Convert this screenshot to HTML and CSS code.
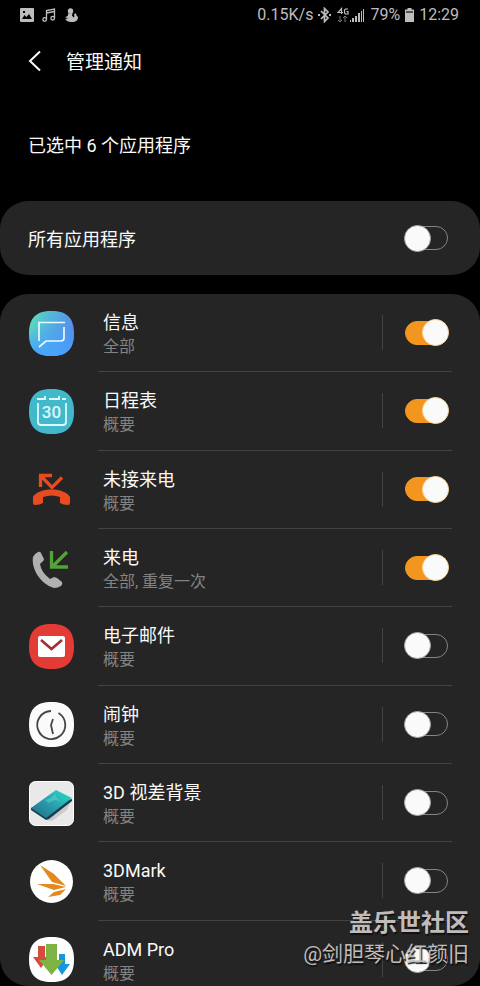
FILE: index.html
```html
<!DOCTYPE html>
<html lang="zh-CN">
<head>
<meta charset="utf-8">
<meta name="viewport" content="width=device-width, initial-scale=1">
<title>管理通知</title>
<link rel="stylesheet" href="styles.css">
</head>
<body>
<div class="status">
  <div class="status-side status-left">
    <svg width="14" height="14" viewBox="0 0 14 14"><path fill="currentColor" fill-rule="evenodd" d="M1 0h12q1 0 1 1v12q0 1-1 1H1q-1 0-1-1V1q0-1 1-1zM2 11h10L9 6 6.500 9 4.500 7zM3 3v2h2V3z"/></svg>
    <svg width="14" height="14" viewBox="0 0 14 14"><g fill="none" stroke="currentColor" stroke-width="1.300"><path d="M4.500 11.500V2.500L12.500 1v9M4.500 5l8-1.500"/><circle cx="2.700" cy="11.500" r="1.800"/><circle cx="10.700" cy="10.200" r="1.800"/></g></svg>
    <svg width="14" height="14" viewBox="0 0 14 14"><g fill="currentColor"><circle cx="6.500" cy="3" r="2.700"/><path d="M4 5.500 8.500 5 8 7.500l1.500 2 1-1-.5-2L12 5l.5 2.500L14 9c0 3-2 5-6 5S1.500 12.500 1.500 11l3-1-3.500-.5 3-2z"/></g></svg>
  </div>
  <div class="status-side status-right">
    <span>0.15K/s</span>
    <svg width="14" height="16" viewBox="0 0 14 16"><path fill="none" stroke="currentColor" stroke-width="1.700" d="m3 4 7 7-3.500 3.500v-13L10 5l-7 7"/><path fill="currentColor" d="M0 7h2v2H0zM11 7h2v2h-2z"/></svg>
    <svg width="28" height="16" viewBox="0 0 28 16"><path fill="none" stroke="currentColor" stroke-width="1.200" d="M4.500 7V1.500L1 5.500h5M11 2H8.500L7.500 3v3l1 1H11V4.500H9.500"/><path fill="none" stroke="#777" d="M3 9v6M1 13l2 2 2-2M8 15V9M6 11l2-2 2 2"/><path fill="currentColor" d="M13 13h1v2h-1zM15 11h2v4h-2zM18 9h2v6h-2zM21 6h2v9h-2zM24 4h1v11h-1zM26 2h1v13h-1z"/></svg>
    <span>79%</span>
    <svg width="9" height="14" viewBox="0 0 9 14"><path fill="currentColor" d="M2.500 0h4v1.500H9V14H0V1.500h2.500z"/><path fill="#555" d="M1 3h7v2H1z"/></svg>
    <span>12:29</span>
  </div>
</div>
<header class="header">
  <button class="back" type="button" aria-label="返回"><svg width="14" height="22" viewBox="0 0 14 22"><path fill="none" stroke="currentColor" stroke-width="2" d="m12 1.500-10 9.500 10 9.500"/></svg></button>
  <h1 class="title">管理通知</h1>
</header>
<p class="summary">已选中 6 个应用程序</p>
<main class="main">
  <section class="card all">
    <label class="all-label" for="all">所有应用程序</label>
    <input class="switch" type="checkbox" id="all">
  </section>
  <section class="card apps">
    <ul class="list">
      <li class="row">
        <svg class="icon" viewBox="0 0 45 45"><defs><linearGradient id="msg" x1="0" y1="0" x2="1" y2=".4"><stop offset="0" stop-color="#5ee6b5"/><stop offset=".45" stop-color="#54b5dc"/><stop offset="1" stop-color="#568cec"/></linearGradient><linearGradient id="msgb" x1="0" y1="0" x2="0" y2="1"><stop offset=".35" stop-color="#45a5ff" stop-opacity="0"/><stop offset="1" stop-color="#45a5ff"/></linearGradient></defs><path fill="url(#msg)" d="M22.500 0C38 0 45 7 45 22.500S38 45 22.500 45 0 38 0 22.500 7 0 22.500 0z"/><path fill="url(#msgb)" d="M22.500 0C38 0 45 7 45 22.500S38 45 22.500 45 0 38 0 22.500 7 0 22.500 0z"/><path fill="none" stroke="#e8fbff" stroke-width="1.700" d="M36 11.500H10V30M35 16v11q0 3-3 3H17l-7 6"/></svg>
        <div class="body"><label class="text" for="a1"><span class="name">信息</span><span class="mode">全部</span></label><span class="control"><input class="switch" type="checkbox" id="a1" checked></span></div>
      </li>
      <li class="row">
        <svg class="icon" viewBox="0 0 45 45"><path fill="#42b9ca" d="M22.500 0C38 0 45 7 45 22.500S38 45 22.500 45 0 38 0 22.500 7 0 22.500 0z"/><path fill="none" stroke="#dcfaff" stroke-width="1.800" d="M9 14v19q0 3 3 3h22q3 0 3-3V14M8 10h8V7M20 10h10V7M33 10h4"/><text x="22.500" y="29" text-anchor="middle" class="date">30</text></svg>
        <div class="body"><label class="text" for="a2"><span class="name">日程表</span><span class="mode">概要</span></label><span class="control"><input class="switch" type="checkbox" id="a2" checked></span></div>
      </li>
      <li class="row">
        <svg class="icon" viewBox="0 0 45 45"><path fill="none" stroke="#e94b20" stroke-width="3.300" d="M11.500 20V8.500H23M12 9l11 11.500L33 10.500"/><path fill="#e94b20" d="M4 30c5-10 32-10 37 0v6q0 2-2 2-5 0-8-2v-6q-8-3-17 0v6q-3 2-8 2-2 0-2-2z"/></svg>
        <div class="body"><label class="text" for="a3"><span class="name">未接来电</span><span class="mode">概要</span></label><span class="control"><input class="switch" type="checkbox" id="a3" checked></span></div>
      </li>
      <li class="row">
        <svg class="icon" viewBox="0 0 45 45"><path fill="#aeb0b1" d="M4 11q1-3 5-5 2-1 3 1l3 6q0 2-2 3l-2 2q1 8 10 15l4-2 3 1 5 4q1 2-1 4-3 2-7 2C11 38 2 22 4 11z"/><path fill="none" stroke="#54a23a" stroke-width="3.300" d="M22.500 5v16H39M24 20 38 6"/></svg>
        <div class="body"><label class="text" for="a4"><span class="name">来电</span><span class="mode">全部, 重复一次</span></label><span class="control"><input class="switch" type="checkbox" id="a4" checked></span></div>
      </li>
      <li class="row">
        <svg class="icon" viewBox="0 0 45 45"><path fill="#e33b36" d="M22.500 0C38 0 45 7 45 22.500S38 45 22.500 45 0 38 0 22.500 7 0 22.500 0z"/><rect x="9" y="12" width="27" height="21" rx="2" fill="#fff"/><path fill="none" stroke="#a52e31" stroke-width="2.600" d="m12 16 10.500 9L33 16"/></svg>
        <div class="body"><label class="text" for="a5"><span class="name">电子邮件</span><span class="mode">概要</span></label><span class="control"><input class="switch" type="checkbox" id="a5"></span></div>
      </li>
      <li class="row">
        <svg class="icon" viewBox="0 0 45 45"><path fill="#fafafa" d="M22.500 0C38 0 45 7 45 22.500S38 45 22.500 45 0 38 0 22.500 7 0 22.500 0z"/><path fill="none" stroke="#454545" stroke-width="1.800" d="M22 9A14 14 0 1 0 29.500 11M24 17l-2 6 2 9"/></svg>
        <div class="body"><label class="text" for="a6"><span class="name">闹钟</span><span class="mode">概要</span></label><span class="control"><input class="switch" type="checkbox" id="a6"></span></div>
      </li>
      <li class="row">
        <svg class="icon" viewBox="0 0 45 45"><defs><linearGradient id="phone" x1="0" y1="1" x2="1" y2="0"><stop offset="0" stop-color="#206b85"/><stop offset=".5" stop-color="#2c9eae"/><stop offset="1" stop-color="#21e5c5"/></linearGradient></defs><rect x=".5" y=".5" width="44" height="44" rx="6" fill="#e9e9ea" stroke="#fff"/><path fill="#cbcbcd" d="m17 39 25-19-4 9-15 11z"/><path fill="#16404f" d="M2 27v2l15 10 3-1 23-18v-2z"/><path fill="url(#phone)" d="m2 27 25-18 16 8-26 20z"/><path fill="#67d4d0" opacity=".5" d="m16 19 6-2 4-4 2 4 4 3-7-1-5 3z"/></svg>
        <div class="body"><label class="text" for="a7"><span class="name">3D 视差背景</span><span class="mode">概要</span></label><span class="control"><input class="switch" type="checkbox" id="a7"></span></div>
      </li>
      <li class="row">
        <svg class="icon" viewBox="0 0 45 45"><circle cx="22.500" cy="22.500" r="21.500" fill="#fff"/><path fill="#e28a1c" d="m11 6 14 9 12 12-14-4zM8 25l16 0 13 3-12 3zM37 30l-6 6-12 2 6-5z"/></svg>
        <div class="body"><label class="text" for="a8"><span class="name">3DMark</span><span class="mode">概要</span></label><span class="control"><input class="switch" type="checkbox" id="a8"></span></div>
      </li>
      <li class="row">
        <svg class="icon" viewBox="0 0 45 45"><path fill="#fff" d="M22.500 0C38 0 45 7 45 22.500S38 45 22.500 45 0 38 0 22.500 7 0 22.500 0z"/><path fill="#d54b3d" d="M9 9h7v11h4L12 31 4 20h5z"/><path fill="#1697df" d="M30 17h6v10h5l-8 11-7-11h4z"/><path fill="#7cb342" d="M17 7h11v16h7L22.500 38 10 23h7z"/></svg>
        <div class="body"><label class="text" for="a9"><span class="name">ADM Pro</span><span class="mode">概要</span></label><span class="control"><input class="switch" type="checkbox" id="a9"></span></div>
      </li>
    </ul>
  </section>
</main>
<div class="watermark"><strong class="community">盖乐世社区</strong><span class="author">@剑胆琴心红颜旧</span></div>
</body>
</html>
```
FILE: styles.css
```css
* { box-sizing: border-box; }
body {
  margin: 0;
  height: 100vh;
  display: flex;
  flex-direction: column;
  position: relative;
  overflow: hidden;
  background: #000;
  color: #fafafa;
  font-family: Roboto, "Noto Sans CJK SC", sans-serif;
  font-size: 18px;
  line-height: 24px;
}
svg { display: block; flex: none; }
.status {
  display: flex;
  justify-content: space-between;
  height: 30px;
  padding: 0 21px 0 20px;
  color: #bdbdbd;
  font-size: 16px;
}
.status-side { display: flex; align-items: center; }
.status-left { gap: 8px; }
.status-right { gap: 5px; }
.header {
  display: flex;
  align-items: center;
  height: 62px;
  padding: 0 28px;
  gap: 24px;
}
.back {
  display: flex;
  padding: 0;
  border: 0;
  background: none;
  color: inherit;
}
.title { margin: 0; padding-top: 4px; font-size: 19px; font-weight: 400; }
.summary { margin: 42px 28px 43px; }
.main {
  flex: 1;
  min-height: 0;
  display: flex;
  flex-direction: column;
  gap: 19px;
}
.card { background: #252525; border-radius: 28px; }
.all {
  display: flex;
  align-items: center;
  justify-content: space-between;
  flex: none;
  min-height: 74px;
  padding: 0 32px 0 28px;
}
.all-label { padding-top: 4px; }
.apps { flex: 1; min-height: 0; overflow: hidden; }
.list {
  display: grid;
  grid-auto-rows: 1fr;
  height: 705px;
  margin: 0;
  padding: 0;
  list-style: none;
}
.row { display: flex; align-items: center; gap: 24px; padding: 0 28px 0 29px; }
.icon { width: 45px; height: 45px; }
.date { font: 500 17px Roboto, sans-serif; fill: #dcfaff; }
.body {
  flex: 1;
  align-self: stretch;
  display: flex;
  align-items: center;
  justify-content: space-between;
  padding: 0 4px 0 5px;
  border-bottom: 1px solid #434343;
}
.text { display: flex; flex-direction: column; padding-top: 5px; }
.mode { color: #838383; font-size: 16px; }
.control {
  display: flex;
  align-items: center;
  height: 35px;
  padding-left: 22px;
  border-left: 1px solid #434343;
}
.switch {
  appearance: none;
  display: flex;
  align-items: center;
  width: 43px;
  height: 24px;
  margin: 0;
  border: 1px solid #858585;
  border-radius: 12px;
}
.switch::before {
  content: "";
  flex: none;
  width: 25px;
  height: 25px;
  margin: 0 -2px;
  border: 1px solid #a5a5a5;
  border-radius: 50%;
  background: #fafafa;
}
.switch:checked {
  justify-content: flex-end;
  border-color: #f3961f;
  background: #f3961f;
}
.switch:checked::before { border-color: #ffd795; }
.watermark {
  position: absolute;
  right: 11px;
  bottom: 17px;
  display: flex;
  flex-direction: column;
  align-items: flex-end;
  color: #c0bcbc;
  text-shadow: 1px 2px 1px #111;
  pointer-events: none;
}
.community { font-size: 24px; line-height: 32px; }
.author { font-size: 21px; line-height: 30px; }
```
